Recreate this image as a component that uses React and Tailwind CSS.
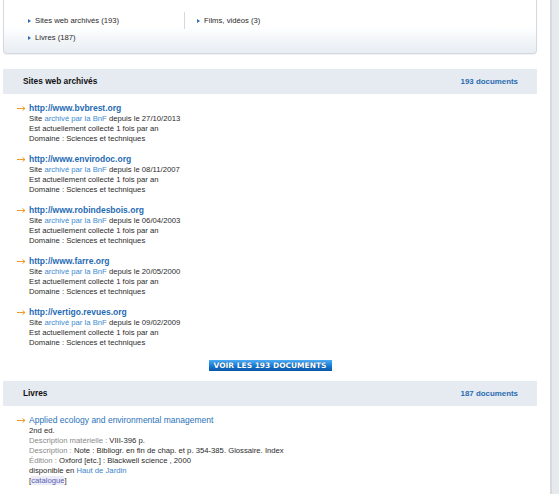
import React from "react";

const sites = [
  { url: "http://www.bvbrest.org", date: "27/10/2013" },
  { url: "http://www.envirodoc.org", date: "08/11/2007" },
  { url: "http://www.robindesbois.org", date: "06/04/2003" },
  { url: "http://www.farre.org", date: "20/05/2000" },
  { url: "http://vertigo.revues.org", date: "09/02/2009" },
];

const Arrow = () => (
  <svg width="9" height="5" viewBox="0 0 9 5" className="block">
    <line x1="0" y1="2.5" x2="8" y2="2.5" stroke="#f19a2a" strokeWidth="1" />
    <polyline points="5.5,0.5 8,2.5 5.5,4.5" fill="none" stroke="#f19a2a" strokeWidth="1" />
  </svg>
);

const Triangle = () => (
  <span className="inline-block w-0 h-0 border-y-[2.5px] border-y-transparent border-l-[3px] border-l-[#2d6cb3] mr-[4px]" />
);

const SectionHeader = ({ title, count }) => (
  <div className="h-[25px] bg-[#e6ebf1] flex items-center justify-between pl-[20px] pr-[19px]">
    <span className="text-[8.3px] font-bold text-[#111]">{title}</span>
    <span className="text-[7.9px] font-bold text-[#2a6cb2]">{count}</span>
  </div>
);

const SiteEntry = ({ url, date }) => (
  <div className="flex pl-[14px]">
    <div className="w-[12px] h-[12px] flex items-center pt-[1px]">
      <Arrow />
    </div>
    <div>
      <div className="text-[8.5px] leading-[12px] font-bold text-[#1f6bb3]">{url}</div>
      <div className="text-[7.7px] leading-[10px] text-[#2b2b2b]">
        Site <span className="text-[#3d8bd1]">archivé par la BnF</span> depuis le {date}
      </div>
      <div className="text-[7.7px] leading-[10px] text-[#2b2b2b]">
        Est actuellement collecté 1 fois par an
      </div>
      <div className="text-[7.7px] leading-[10px] text-[#2b2b2b]">
        Domaine : Sciences et techniques
      </div>
    </div>
  </div>
);

export default function App() {
  return (
    <div className="flex w-[559px] h-[494px] overflow-hidden bg-white font-['Liberation_Sans',Arial,sans-serif]">
      <div className="ml-[3px] w-[534px] flex flex-col shrink-0">
        <div className="h-[54px] rounded-b-[4px] border border-t-0 border-[#d3d8de] bg-gradient-to-b from-white via-white to-[#e7edf3] shadow-[0_1px_1px_rgba(0,0,0,0.06)] flex pt-[12px] pl-[24px]">
          <div className="w-[156px] flex flex-col">
            <div className="h-[17px] flex items-center text-[7.7px] text-[#2b2b2b]">
              <Triangle />
              Sites web archivés (193)
            </div>
            <div className="h-[17px] flex items-center text-[7.7px] text-[#2b2b2b]">
              <Triangle />
              Livres (187)
            </div>
          </div>
          <div className="w-px h-[17px] bg-[#d5d9de]" />
          <div className="pl-[12px] h-[17px] flex items-center text-[7.7px] text-[#2b2b2b]">
            <Triangle />
            Films, vidéos (3)
          </div>
        </div>

        <div className="mt-[15px]">
          <SectionHeader title="Sites web archivés" count="193 documents" />
        </div>

        <div className="pt-[8px] flex flex-col gap-[9px]">
          {sites.map((s) => (
            <SiteEntry key={s.url} {...s} />
          ))}
        </div>

        <div className="mt-[12px] flex justify-center">
          <div className="w-[123px] h-[11px] flex items-center justify-center bg-gradient-to-b from-[#4aacf6] via-[#1a7fd9] to-[#0a56a6] text-white font-['DejaVu_Sans',Verdana,sans-serif] font-bold text-[7.5px] leading-none [text-shadow:0_0_1px_rgba(0,40,90,0.8)]">
            VOIR LES 193 DOCUMENTS
          </div>
        </div>

        <div className="mt-[10px]">
          <SectionHeader title="Livres" count="187 documents" />
        </div>

        <div className="pt-[8px] flex pl-[14px]">
          <div className="w-[12px] h-[12px] flex items-center pt-[1px]">
            <Arrow />
          </div>
          <div className="text-[7.7px] leading-[10px] text-[#2b2b2b]">
            <div className="text-[8.5px] leading-[12px] text-[#2a72b8]">
              Applied ecology and environmental management
            </div>
            <div>2nd ed.</div>
            <div>
              <span className="text-[#8a8a8a]">Description matérielle : </span>VIII-396 p.
            </div>
            <div>
              <span className="text-[#8a8a8a]">Description : </span>Note : Bibliogr. en fin de chap. et p. 354-385. Glossaire. Index
            </div>
            <div>
              <span className="text-[#8a8a8a]">Édition : </span>Oxford [etc.] : Blackwell science , 2000
            </div>
            <div>
              disponible en <span className="text-[#3a84c9]">Haut de Jardin</span>
            </div>
            <div>
              [<span className="text-[#5b5fae] bg-[#ececf8]">catalogue</span>]
            </div>
          </div>
        </div>
      </div>
      <div className="ml-[13px] w-[9px] shrink-0 border-l-2 border-[#d6d9dd] bg-[#e7eaed]" />
    </div>
  );
}
